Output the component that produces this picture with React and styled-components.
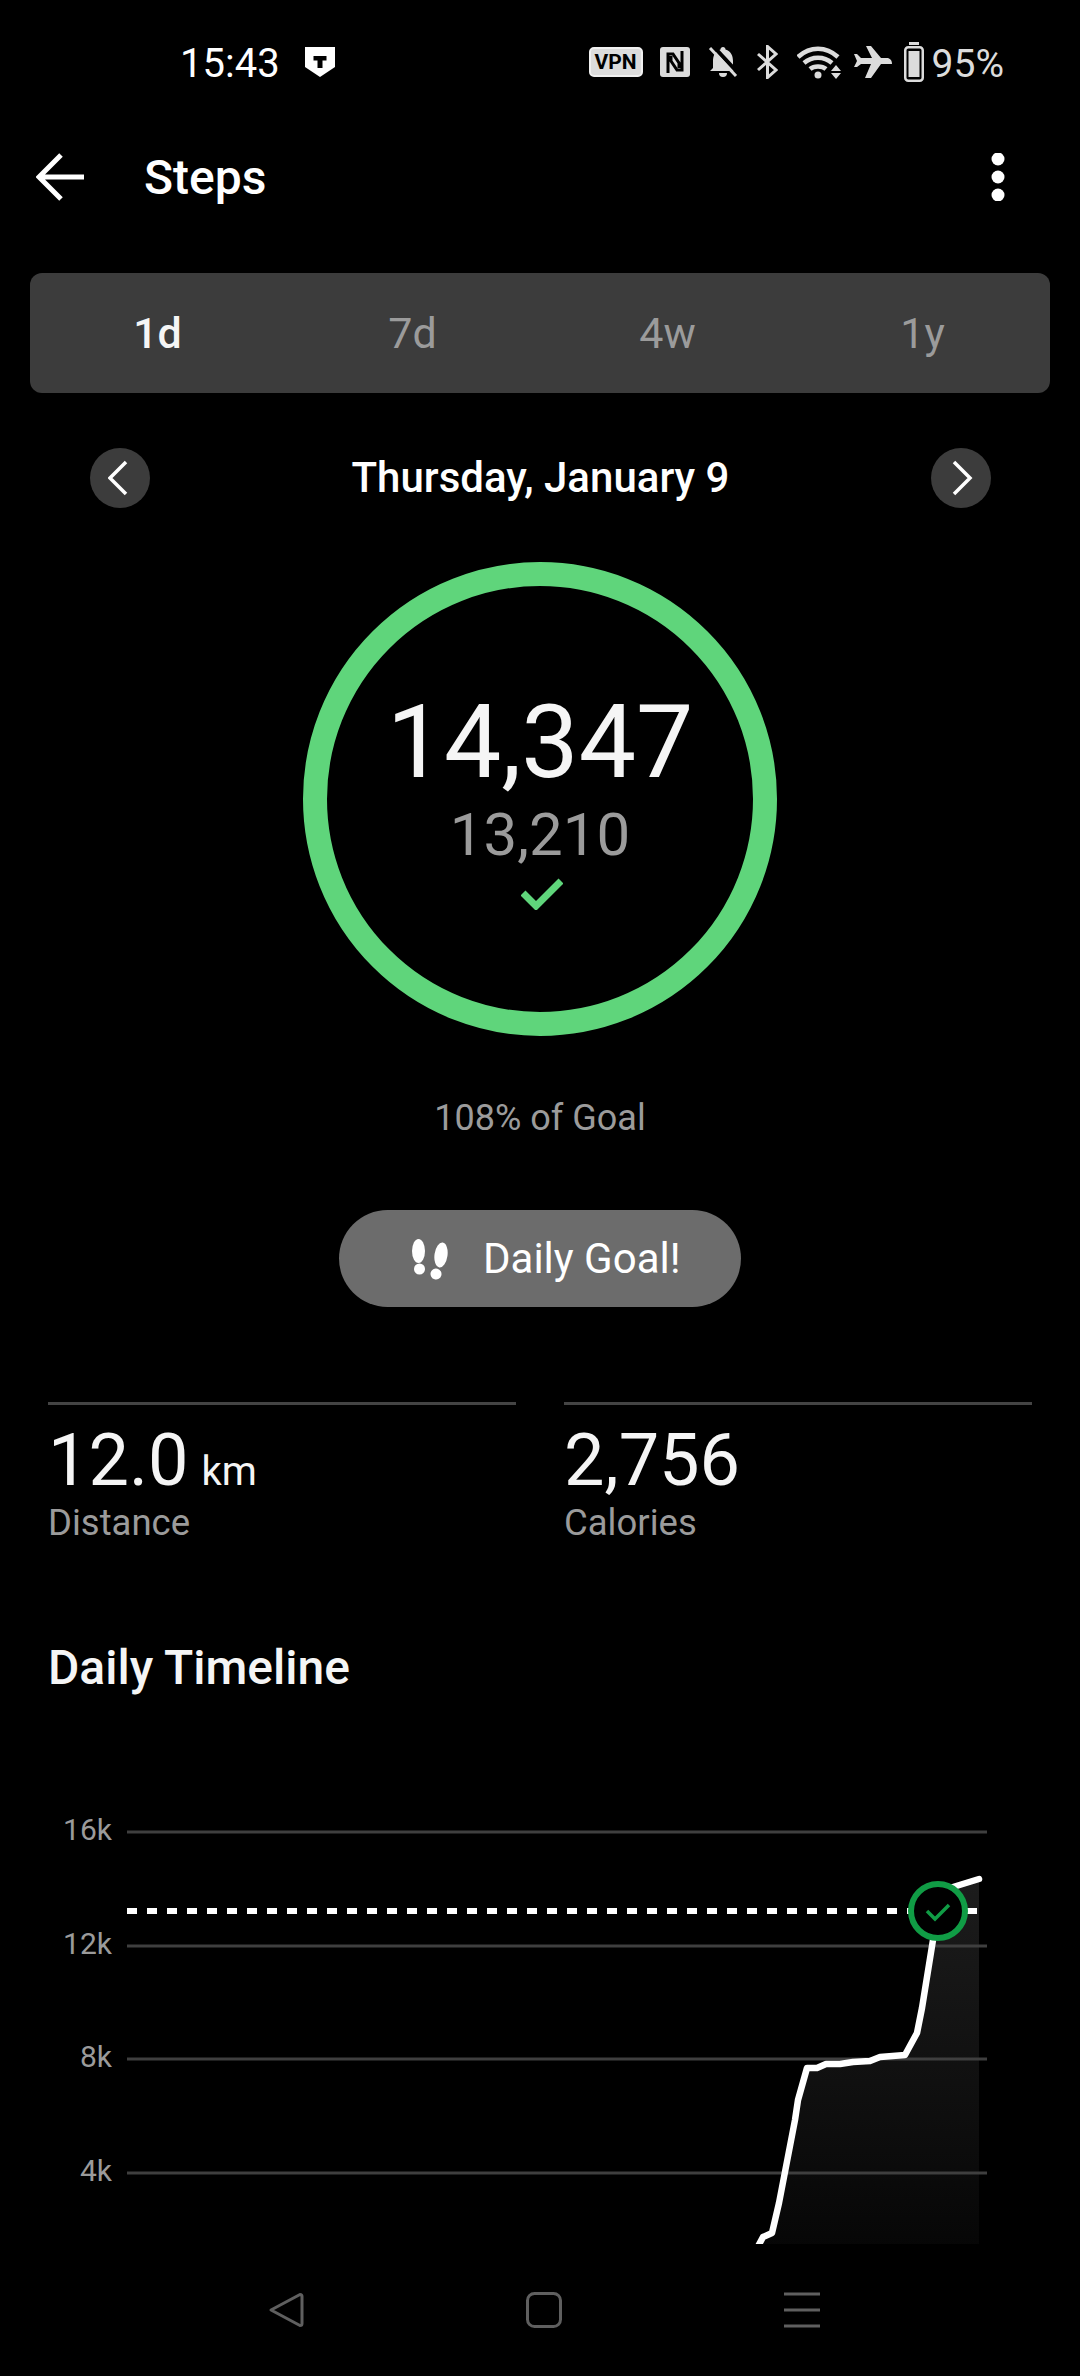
import React from 'react';
import styled, { createGlobalStyle } from 'styled-components';

const GlobalStyle = createGlobalStyle`
  html, body {
    margin: 0;
    padding: 0;
    background: #000;
    font-family: Roboto, "Liberation Sans", sans-serif;
  }
`;

const Page = styled.div`
  width: 1080px;
  height: 2376px;
  background: #000;
  color: #f5f5f5;
  display: flex;
  flex-direction: column;
  overflow: hidden;
`;

const Content = styled.div`
  height: 2244px;
  overflow: hidden;
  flex-shrink: 0;
`;

// Status bar
const StatusBar = styled.div`
  height: 122px;
  padding: 0 76px 0 180px;
  display: flex;
  align-items: center;
  box-sizing: border-box;
`;

const Clock = styled.span`
  margin-top: 5px;
  font-size: 40px;
  color: #fff;
  line-height: 1;
`;

const ShieldIcon = styled.svg`
  width: 30px;
  height: 30px;
  margin-left: 25px;
  margin-top: 2px;
`;

const StatusIcons = styled.div`
  margin-left: auto;
  margin-top: 2px;
  display: flex;
  align-items: center;
  color: #dcdcdc;
`;

const VpnBadge = styled.span`
  width: 54px;
  height: 30px;
  box-sizing: border-box;
  background: #dcdcdc;
  border: 2px solid #f0f0f0;
  border-radius: 5px;
  color: #000;
  font-size: 21px;
  font-weight: 700;
  line-height: 26px;
  text-align: center;
`;

const StatusGlyph = styled.svg`
  display: block;
  margin-left: ${(p) => p.$gap}px;
`;

const BatteryText = styled.span`
  margin-left: 8px;
  margin-top: 4px;
  font-size: 39px;
  line-height: 1;
  color: #dcdcdc;
`;

// Toolbar
const Toolbar = styled.div`
  height: 110px;
  padding: 0 73px 0 36px;
  display: flex;
  align-items: center;
`;

const BackIcon = styled.svg`
  width: 48px;
  height: 48px;
  display: block;
`;

const Title = styled.h1`
  margin: 0 0 0 60px;
  font-size: 48px;
  font-weight: 500;
  color: #fff;
`;

const MoreIcon = styled.svg`
  margin-left: auto;
  width: 18px;
  height: 48px;
  display: block;
`;

// Range tabs
const Tabs = styled.div`
  margin: 41px 30px 0;
  height: 120px;
  background: #3c3c3c;
  border-radius: 12px;
  display: grid;
  grid-template-columns: repeat(4, 1fr);
`;

const Tab = styled.div`
  display: flex;
  align-items: center;
  justify-content: center;
  font-size: 43px;
  font-weight: ${(p) => (p.$active ? 500 : 400)};
  color: ${(p) => (p.$active ? '#f5f5f5' : '#9b9b9b')};
`;

// Date row
const DateRow = styled.div`
  margin-top: 55px;
  padding: 0 89px 0 90px;
  height: 60px;
  display: flex;
  align-items: center;
  justify-content: space-between;
`;

const RoundButton = styled.div`
  width: 60px;
  height: 60px;
  border-radius: 50%;
  background: #3c3c3c;
  display: flex;
  align-items: center;
  justify-content: center;
`;

const DateLabel = styled.div`
  padding-bottom: 2px;
  font-size: 42px;
  font-weight: 500;
  color: #fff;
`;

// Goal ring
const Ring = styled.div`
  margin: 54px auto 0;
  width: 474px;
  height: 474px;
  box-sizing: border-box;
  border: 24px solid #5fd57b;
  border-radius: 50%;
  display: flex;
  flex-direction: column;
  align-items: center;
`;

const StepCount = styled.div`
  margin-top: 112px;
  font-size: 102px;
  line-height: 88px;
  color: #f5f5f5;
`;

const GoalCount = styled.div`
  margin-top: 19px;
  font-size: 60px;
  line-height: 60px;
  color: #9b9b9b;
`;

const RingCheck = styled.svg`
  margin: 13px 0 0 3px;
  width: 42px;
  height: 32px;
  display: block;
`;

const GoalPercent = styled.div`
  margin-top: 59px;
  text-align: center;
  font-size: 36px;
  line-height: 46px;
  color: #9b9b9b;
`;

const GoalPill = styled.div`
  margin: 69px auto 0;
  width: 402px;
  height: 97px;
  box-sizing: border-box;
  padding-left: 72px;
  border-radius: 49px;
  background: #6c6c6c;
  display: flex;
  align-items: center;
`;

const FeetIcon = styled.svg`
  width: 38px;
  height: 42px;
  display: block;
`;

const PillLabel = styled.span`
  margin-left: 34px;
  font-size: 42px;
  color: #fff;
`;

// Stats
const Stats = styled.div`
  margin-top: 95px;
  padding: 0 48px;
  display: grid;
  grid-template-columns: 1fr 1fr;
  column-gap: 48px;
`;

const Stat = styled.div`
  border-top: 3px solid #444;
`;

const StatValue = styled.div`
  margin-top: 18px;
  font-size: 72px;
  line-height: 76px;
  color: #f5f5f5;
`;

const StatUnit = styled.span`
  margin-left: 13px;
  font-size: 40px;
  line-height: 1;
`;

const StatLabel = styled.div`
  margin-top: 2px;
  font-size: 36.5px;
  line-height: 44px;
  color: #9b9b9b;
`;

const SectionTitle = styled.h2`
  margin: 96px 0 0 48px;
  font-size: 48px;
  line-height: 54px;
  font-weight: 500;
  color: #f5f5f5;
`;

const Chart = styled.svg`
  display: block;
  margin-top: 109px;
  width: 1080px;
  height: 440px;
`;

const AxisLabel = styled.text`
  font-family: Roboto, sans-serif;
  font-size: 30px;
  fill: #9b9b9b;
  text-anchor: end;
`;

// Navigation bar
const NavBar = styled.div`
  flex: 1;
  display: flex;
  align-items: center;
`;

const NavSlot = styled.svg`
  display: block;
  margin-left: ${(p) => p.$gap}px;
`;

// chart origin is y=1804 in the page, values below are chart-local
const gridLines = [
  { label: '16k', y: 28 },
  { label: '12k', y: 142 },
  { label: '8k', y: 255 },
  { label: '4k', y: 369 },
];

const stepLine =
  'M755 448 L763 433 L772 429 L779 399 L795 316 L798 296 L807 264 L817 264 L826 260 L840 260 L853 258 L870 257 L880 253 L905 251 L917 229 L922 204 L933 136 L938 110 L945 90 L953 83 L979 75';

const App = () => (
  <Page>
    <GlobalStyle />
    <Content>
      <StatusBar>
        <Clock>15:43</Clock>
        <ShieldIcon viewBox="0 0 30 30">
          <path d="M0 0h30v20L15 30 0 20z" fill="#fff" />
          <path d="M8.500 9h13v4.500h-4V21h-5v-7.500h-4z" fill="#000" />
        </ShieldIcon>
        <StatusIcons>
          <VpnBadge>VPN</VpnBadge>
          <StatusGlyph $gap={17} width="30" height="30" viewBox="0 0 30 30">
            <rect width="30" height="30" rx="3" fill="#dcdcdc" />
            <path d="M8 26V7h5l6 9v5M22 4v19h-5l-6-9V9" fill="none" stroke="#000" strokeWidth="3" />
          </StatusGlyph>
          <StatusGlyph $gap={18} width="30" height="32" viewBox="0 0 30 32">
            <path d="M15 1c1.500 0 2.500 1 2.500 2.500C23 5 25 10 25 15v7l3 3H2l3-3v-7C5 10 7 5 12.500 3.500 12.500 2 13.500 1 15 1zM11 27h8a4 4 0 0 1-8 0z" fill="#dcdcdc" />
            <path d="M5 0l25 27" stroke="#000" strokeWidth="4" />
            <path d="M2 2l26 28" stroke="#dcdcdc" strokeWidth="3" />
          </StatusGlyph>
          <StatusGlyph $gap={19} width="21" height="34" viewBox="0 0 21 34" fill="none" stroke="#dcdcdc" strokeWidth="3">
            <path d="M1 9l18 16-8.500 7.500V1.500L19 9 1 25" />
          </StatusGlyph>
          <StatusGlyph $gap={19} width="45" height="34" viewBox="0 0 45 34">
            <path d="M1 12c12-11 28-11 40 0M7 18c8-7 20-7 28 0M13 24c4-3.500 12-3.500 16 0" fill="none" stroke="#dcdcdc" strokeWidth="4.500" />
            <circle cx="21" cy="30" r="3.500" fill="#dcdcdc" />
            <path d="M34 26l5-6 5 6zM34 28l5 6 5-6z" fill="#dcdcdc" />
          </StatusGlyph>
          <StatusGlyph $gap={11} width="39" height="32" viewBox="0 0 39 32">
            <path d="M1 8h3l4 4h11L13 0h5l10 12h7c3 1 4 3 4 6H28L18 32h-6l6-14H8l-4 3H1l3-6z" fill="#dcdcdc" />
          </StatusGlyph>
          <StatusGlyph $gap={12} width="20" height="40" viewBox="0 0 20 40">
            <rect x="5" y="0" width="10" height="3" fill="#dcdcdc" />
            <rect x="1.250" y="5.250" width="17.500" height="33.500" rx="3" fill="none" stroke="#dcdcdc" strokeWidth="2.500" />
            <rect x="4.500" y="9" width="11" height="26" fill="#dcdcdc" />
          </StatusGlyph>
          <BatteryText>95%</BatteryText>
        </StatusIcons>
      </StatusBar>

      <Toolbar>
        <BackIcon viewBox="0 0 48 48" fill="none" stroke="#fff" strokeWidth="5">
          <path d="M48 24H4M25 2L3 24l22 22" />
        </BackIcon>
        <Title>Steps</Title>
        <MoreIcon viewBox="0 0 18 48" fill="#fff">
          <circle cx="9" cy="6" r="6.500" />
          <circle cx="9" cy="24" r="6.500" />
          <circle cx="9" cy="42" r="6.500" />
        </MoreIcon>
      </Toolbar>

      <Tabs>
        <Tab $active>1d</Tab>
        <Tab>7d</Tab>
        <Tab>4w</Tab>
        <Tab>1y</Tab>
      </Tabs>

      <DateRow>
        <RoundButton>
          <svg width="24" height="36" viewBox="0 0 24 36" fill="none" stroke="#fff" strokeWidth="3.500">
            <path d="M18 2L2 18l16 16" />
          </svg>
        </RoundButton>
        <DateLabel>Thursday, January 9</DateLabel>
        <RoundButton>
          <svg width="24" height="36" viewBox="0 0 24 36" fill="none" stroke="#fff" strokeWidth="3.500">
            <path d="M5 2l16 16L5 34" />
          </svg>
        </RoundButton>
      </DateRow>

      <Ring>
        <StepCount>14,347</StepCount>
        <GoalCount>13,210</GoalCount>
        <RingCheck viewBox="0 0 42 32" fill="none" stroke="#5fd57b" strokeWidth="7">
          <path d="M2 15l13 13L40 3" />
        </RingCheck>
      </Ring>

      <GoalPercent>108% of Goal</GoalPercent>

      <GoalPill>
        <FeetIcon viewBox="0 0 38 42" fill="#fff">
          <ellipse cx="7.500" cy="13" rx="6.500" ry="12" />
          <ellipse cx="8.500" cy="31" rx="5.500" ry="5.500" />
          <ellipse cx="30" cy="17" rx="6.500" ry="12.500" transform="rotate(8 30 17)" />
          <ellipse cx="25" cy="36" rx="5.500" ry="5.500" transform="rotate(15 25 36)" />
        </FeetIcon>
        <PillLabel>Daily Goal!</PillLabel>
      </GoalPill>

      <Stats>
        <Stat>
          <StatValue>12.0<StatUnit>km</StatUnit></StatValue>
          <StatLabel>Distance</StatLabel>
        </Stat>
        <Stat>
          <StatValue>2,756</StatValue>
          <StatLabel>Calories</StatLabel>
        </Stat>
      </Stats>

      <SectionTitle>Daily Timeline</SectionTitle>

      <Chart viewBox="0 0 1080 440">
        <defs>
          <linearGradient id="areaFade" x1="0" y1="0" x2="0" y2="1">
            <stop offset="0" stopColor="#1c1c1c" />
            <stop offset="1" stopColor="#060606" />
          </linearGradient>
        </defs>
        <path d={`${stepLine} L979 448 Z`} fill="url(#areaFade)" />
        {gridLines.map((g) => (
          <g key={g.label}>
            <line x1="127" x2="987" y1={g.y} y2={g.y} stroke="#3f3f3f" strokeWidth="3" />
            <AxisLabel x="112" y={g.y + 8}>{g.label}</AxisLabel>
          </g>
        ))}
        <line x1="127" x2="977" y1="107" y2="107" stroke="#fff" strokeWidth="6" strokeDasharray="10 10" />
        <path d={stepLine} fill="none" stroke="#fff" strokeWidth="6.500" strokeLinejoin="round" strokeLinecap="round" />
        <circle cx="938" cy="107" r="27" fill="#000" stroke="#109c45" strokeWidth="6" />
        <path d="M927 107l8 8 14-14" fill="none" stroke="#109c45" strokeWidth="3.500" />
      </Chart>
    </Content>

    <NavBar>
      <NavSlot $gap={268} width="36" height="36" viewBox="0 0 36 36" fill="none" stroke="#5f5f5f" strokeWidth="3" strokeLinejoin="round">
        <path d="M3 18L32 2.500c1 0 2 .5 2 2v27c0 1.500-1 2-2 2z" />
      </NavSlot>
      <NavSlot $gap={222} width="36" height="36" viewBox="0 0 36 36" fill="none" stroke="#5f5f5f" strokeWidth="3">
        <rect x="1.500" y="1.500" width="33" height="33" rx="7" />
      </NavSlot>
      <NavSlot $gap={222} width="36" height="36" viewBox="0 0 36 36" stroke="#5f5f5f" strokeWidth="3">
        <path d="M0 2h36M0 18h36M0 34h36" />
      </NavSlot>
    </NavBar>
  </Page>
);

export default App;
